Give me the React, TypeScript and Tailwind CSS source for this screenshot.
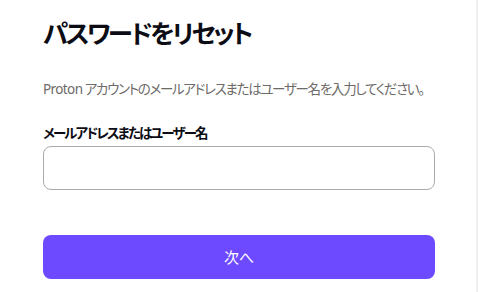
import React from "react";

export default function App() {
  return (
    <div className="w-[480px] h-[292px] bg-white flex overflow-hidden">
      <div className="w-[478px] h-full border-r-2 border-[#efefef] pl-[43px] pr-[43px] flex flex-col [font-family:'Noto_Sans','Noto_Sans_CJK_JP',sans-serif] [font-feature-settings:'palt']">
        <h1 className="mt-[15px] text-[25.5px] leading-[36px] font-bold text-[#0c0c14] tracking-[-2.6px] whitespace-nowrap">
          パスワードをリセット
        </h1>
        <p className="mt-[28px] text-[13.5px] leading-[20px] text-[#6d6a68] tracking-[-1.3px] whitespace-nowrap">
          <span className="tracking-[-0.6px]">Proton</span> アカウントのメールアドレスまたはユーザー名を入力してください。
        </p>
        <label className="mt-[24px] text-[13.5px] leading-[20px] font-bold text-[#0c0c14] tracking-[-1.9px] whitespace-nowrap">
          メールアドレスまたはユーザー名
        </label>
        <input
          type="text"
          className="mt-[3px] w-[392px] h-[44px] rounded-[8px] border border-[#adaba8] bg-white outline-none px-3"
        />
        <button className="mt-[45px] w-[392px] h-[44px] rounded-[8px] bg-[#6d4aff] text-white text-[15px]">
          次へ
        </button>
      </div>
    </div>
  );
}
